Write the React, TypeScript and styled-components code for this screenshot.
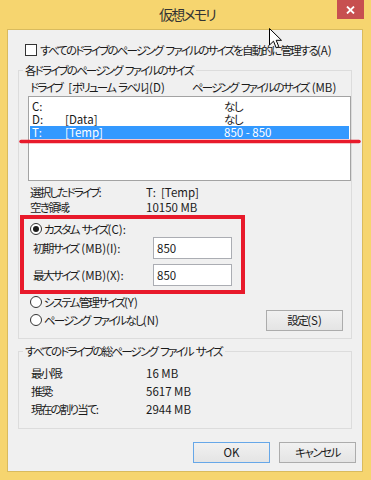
import React from 'react';
import styled, { createGlobalStyle } from 'styled-components';

const GlobalStyle = createGlobalStyle`
  html, body { margin: 0; padding: 0; background: #fff; }
  body {
    font-family: "Noto Sans CJK JP", "Noto Sans", sans-serif;
    font-size: 11.5px;
    color: #1a1a1a;
    font-feature-settings: "palt" 1;
    letter-spacing: -1.8px;
    word-spacing: 2.3px;
  }
  * { box-sizing: border-box; }
`;

const Window = styled.div`
  position: relative;
  width: 371px;
  height: 480px;
  background: #f6d56f;
  display: flex;
  flex-direction: column;
`;

const TitleBar = styled.div`
  height: 29px;
  display: grid;
  grid-template-columns: 1fr auto 1fr;
`;

const Title = styled.div`
  grid-column: 2;
  align-self: center;
  font-size: 14px;
  letter-spacing: -1.8px;
  color: #333;
  padding: 0 0 1px 3px;
`;

const CloseButton = styled.div`
  grid-column: 3;
  justify-self: end;
  align-self: start;
  width: 27px;
  height: 19px;
  margin-right: 7px;
  background: #c75050;
  display: flex;
  align-items: center;
  justify-content: center;
`;

const Client = styled.div`
  flex: 1;
  margin: 0 8px 8px 7px;
  background: #f0f0f0;
  border: 1px solid #d9bb5e;
  padding: 13px 10px 0 10px;
  display: flex;
  flex-direction: column;
`;

const CheckRow = styled.label`
  display: flex;
  align-items: center;
  gap: 3px;
  height: 13px;
  margin-left: 7px;
  white-space: nowrap;
`;

const CheckBox = styled.span`
  flex-shrink: 0;
  width: 12px;
  height: 12px;
  border: 1px solid #333;
  background: #fff;
`;

const Latin = styled.span`
  letter-spacing: 0;
  word-spacing: 0;
`;

const Group = styled.fieldset<{ $top: number; $bottom: number }>`
  margin: ${p => p.$top}px 0 0;
  padding: 0 0 ${p => p.$bottom}px;
  border: 1px solid #dcdcdc;
  min-width: 0;
`;

const Legend = styled.legend`
  margin-left: 4px;
  padding: 0 3px 0 2px;
  line-height: 14px;
  white-space: nowrap;
`;

const Header = styled.div`
  display: grid;
  grid-template-columns: 162px 1fr;
  line-height: 14px;
  margin-top: 3px;
  padding-left: 11px;
  white-space: nowrap;
`;

const ListBox = styled.div`
  height: 85px;
  margin: 2px 0 0 9px;
  border: 1px solid #a3a3a3;
  background: #fff;
  padding: 3px 1px 1px;
`;

const ListRow = styled.div<{ $selected?: boolean }>`
  display: grid;
  grid-template-columns: 33px 159px 1fr;
  height: 13px;
  line-height: 13px;
  padding-left: 2px;
  letter-spacing: 0;
  word-spacing: 0;
  background: ${p => (p.$selected ? '#3399ff' : 'transparent')};
  color: ${p => (p.$selected ? '#fff' : '#1a1a1a')};
  white-space: nowrap;
`;

const Kana = styled.span`
  letter-spacing: -1.5px;
`;

const InfoGrid = styled.div<{ $col: number; $row: number; $left: number; $top: number }>`
  display: grid;
  grid-template-columns: ${p => p.$col}px 1fr;
  grid-auto-rows: ${p => p.$row}px;
  align-items: center;
  padding-left: ${p => p.$left}px;
  margin-top: ${p => p.$top}px;
  white-space: nowrap;
`;

const Value = styled.span`
  letter-spacing: 0;
  word-spacing: 0;
`;

const RedFrame = styled.div`
  width: 225px;
  margin-left: 1px;
  border: 4px solid #e81a2b;
  padding: 4px 0 4px 6px;
  display: flex;
  flex-direction: column;
`;

const RadioRow = styled.label<{ $top?: number; $left?: number }>`
  display: flex;
  align-items: center;
  gap: 2px;
  height: 13px;
  margin-top: ${p => p.$top ?? 0}px;
  margin-left: ${p => p.$left ?? 0}px;
  white-space: nowrap;
`;

const Radio = styled.span<{ $checked?: boolean }>`
  flex-shrink: 0;
  width: 12px;
  height: 12px;
  border-radius: 50%;
  border: 1px solid #333;
  background: #fff;
  display: flex;
  align-items: center;
  justify-content: center;
  &::after {
    content: '';
    width: 6px;
    height: 6px;
    border-radius: 50%;
    background: ${p => (p.$checked ? '#1a1a1a' : 'transparent')};
  }
`;

const InputRow = styled.div<{ $top: number }>`
  display: grid;
  grid-template-columns: 120px 79px;
  align-items: center;
  height: 22px;
  margin-top: ${p => p.$top}px;
  padding-left: 3px;
  white-space: nowrap;
`;

const TextBox = styled.div`
  height: 22px;
  border: 1px solid #abadb3;
  background: #fff;
  padding-left: 3px;
  letter-spacing: 0;
  display: flex;
  align-items: center;
`;

const BottomRow = styled.div`
  display: flex;
  justify-content: space-between;
  align-items: center;
  height: 21px;
  margin-top: 1.5px;
  padding: 0 8px 0 11px;
`;

const Button = styled.div<{ $default?: boolean }>`
  width: 77px;
  height: 21px;
  display: flex;
  align-items: center;
  justify-content: center;
  background: linear-gradient(#f1f1f1, #e4e4e4);
  border: 1px solid ${p => (p.$default ? '#66a7e8' : '#acacac')};
  letter-spacing: ${p => (p.$default ? '0' : '-1.5px')};
  white-space: nowrap;
`;

const ButtonBar = styled.div`
  display: flex;
  justify-content: flex-end;
  gap: 9px;
  margin: 13px -4px 0 0;
`;

const Cursor = styled.svg`
  position: absolute;
  left: 269px;
  top: 28px;
`;

export default function App() {
  return (
    <>
      <GlobalStyle />
      <Window>
        <TitleBar>
          <Title>仮想メモリ</Title>
          <CloseButton>
            <svg width="9" height="8" viewBox="0 0 9 8">
              <path d="M1 0.5 L8 7.5 M8 0.5 L1 7.5" stroke="#fff" strokeWidth="1.8" />
            </svg>
          </CloseButton>
        </TitleBar>
        <Client>
          <CheckRow>
            <CheckBox />
            <span>
              すべてのドライブのページング ファイルのサイズを自動的に管理する<Latin>(A)</Latin>
            </span>
          </CheckRow>

          <Group $top={7} $bottom={7}>
            <Legend>各ドライブのページング ファイルのサイズ</Legend>
            <Header>
              <span>
                ドライブ&nbsp; <Latin>[</Latin>ボリューム ラベル<Latin>](D)</Latin>
              </span>
              <span>
                ページング ファイルのサイズ <Latin>(MB)</Latin>
              </span>
            </Header>
            <ListBox>
              <ListRow>
                <span>C:</span>
                <span></span>
                <Kana>なし</Kana>
              </ListRow>
              <ListRow>
                <span>D:</span>
                <span>[Data]</span>
                <Kana>なし</Kana>
              </ListRow>
              <ListRow $selected>
                <span>T:</span>
                <span>[Temp]</span>
                <span>850 - 850</span>
              </ListRow>
            </ListBox>
            <InfoGrid $col={116} $row={15} $left={11} $top={3.5}>
              <span>選択したドライブ:</span>
              <Value>T:&nbsp;&nbsp;[Temp]</Value>
              <span>空き領域:</span>
              <Value>10150 MB</Value>
            </InfoGrid>
            <RedFrame>
              <RadioRow>
                <Radio $checked />
                <span>
                  カスタム サイズ<Latin>(C):</Latin>
                </span>
              </RadioRow>
              <InputRow $top={1}>
                <span>
                  初期サイズ <Latin>(MB)(I):</Latin>
                </span>
                <TextBox>850</TextBox>
              </InputRow>
              <InputRow $top={5}>
                <span>
                  最大サイズ <Latin>(MB)(X):</Latin>
                </span>
                <TextBox>850</TextBox>
              </InputRow>
            </RedFrame>
            <RadioRow $top={1.5} $left={11}>
              <Radio />
              <span>
                システム管理サイズ<Latin>(Y)</Latin>
              </span>
            </RadioRow>
            <BottomRow>
              <RadioRow>
                <Radio />
                <span>
                  ページング ファイルなし<Latin>(N)</Latin>
                </span>
              </RadioRow>
              <Button>
                <span>
                  設定<Latin>(S)</Latin>
                </span>
              </Button>
            </BottomRow>
          </Group>

          <Group $top={5.5} $bottom={10}>
            <Legend>すべてのドライブの総ページング ファイル サイズ</Legend>
            <InfoGrid $col={115} $row={18} $left={12} $top={5.5}>
              <span>最小限:</span>
              <Value>16 MB</Value>
              <span>推奨:</span>
              <Value>5617 MB</Value>
              <span>現在の割り当て:</span>
              <Value>2944 MB</Value>
            </InfoGrid>
          </Group>

          <ButtonBar>
            <Button $default>OK</Button>
            <Button>キャンセル</Button>
          </ButtonBar>
        </Client>

        <Cursor width="14" height="22" viewBox="0 0 14 22">
          <path
            d="M0.5 0.5 L0.5 17 L4.5 13.2 L7.2 19.8 L9.8 18.7 L7.2 12.3 L12.5 12.3 Z"
            fill="#fff"
            stroke="#000"
            strokeWidth="1"
            strokeLinejoin="miter"
          />
        </Cursor>

        <svg
          width="342"
          height="5"
          style={{ position: 'absolute', left: 19, top: 139 }}
          viewBox="0 0 342 5"
        >
          <path d="M2 2.5 L340 2.5" stroke="#e81a2b" strokeWidth="3.5" strokeLinecap="round" />
        </svg>
      </Window>
    </>
  );
}
